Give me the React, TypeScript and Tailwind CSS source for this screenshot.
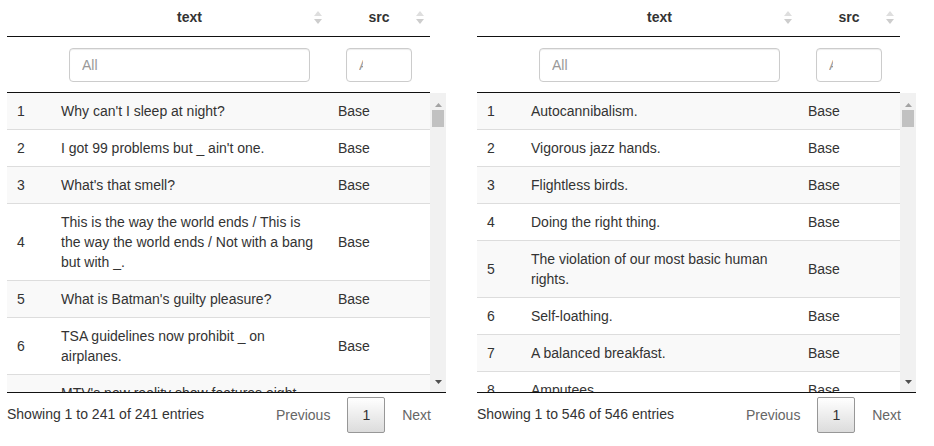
const leftRows = [
  "Why can't I sleep at night?",
  "I got 99 problems but _ ain't one.",
  "What's that smell?",
  'This is the way the world ends / This is the way the world ends / Not with a bang but with _.',
  "What is Batman's guilty pleasure?",
  'TSA guidelines now prohibit _ on airplanes.',
  "MTV's new reality show features eight washed-up celebrities living with _.",
];

const rightRows = [
  'Autocannibalism.',
  'Vigorous jazz hands.',
  'Flightless birds.',
  'Doing the right thing.',
  'The violation of our most basic human rights.',
  'Self-loathing.',
  'A balanced breakfast.',
  'Amputees.',
  'Throwing a virgin into a volcano.',
];

function SortIcon() {
  return (
    <svg width="8" height="15" viewBox="0 0 8 15" className="absolute right-[6px] top-[10px]">
      <polygon points="0,6 4,1 8,6" fill="#dedede" />
      <polygon points="0,9 4,14 8,9" fill="#cdcdcd" />
    </svg>
  );
}

function Panel({ rows, total }: { rows: string[]; total: number }) {
  return (
    <div className="w-[439px]">
      {/* Header */}
      <div className="flex w-[423px] border-b border-[#111] font-bold">
        <div className="w-[44px]" />
        <div className="relative w-[277px] px-[18px] pt-[7px] pb-[9px] text-center">
          text
          <SortIcon />
        </div>
        <div className="relative w-[102px] px-[18px] pt-[7px] pb-[9px] text-center">
          src
          <SortIcon />
        </div>
      </div>

      {/* Filters */}
      <div className="flex w-[423px] border-b border-[#111] pt-[11px] pb-[10px]">
        <div className="w-[44px]" />
        <div className="w-[277px] px-[18px]">
          <input
            placeholder="All"
            className="h-[34px] w-full rounded-[4px] border border-[#ccc] px-3 placeholder:text-[#999] shadow-[inset_0_1px_1px_rgba(0,0,0,0.075)]"
          />
        </div>
        <div className="w-[102px] px-[18px]">
          <input
            placeholder="All"
            className="h-[34px] w-full rounded-[4px] border border-[#ccc] pl-3 pr-[48px] placeholder:text-[#999] shadow-[inset_0_1px_1px_rgba(0,0,0,0.075)]"
          />
        </div>
      </div>

      {/* Body + scrollbar */}
      <div className="flex h-[299px]">
        <div className="w-[423px] overflow-hidden">
          {rows.map((r, i) => (
            <div
              key={i}
              className={`flex items-center ${i > 0 ? 'border-t border-[#ddd]' : ''} ${i % 2 === 0 ? 'bg-[#f9f9f9]' : 'bg-white'}`}
            >
              <div className="w-[44px] px-[10px] py-2">{i + 1}</div>
              <div className="w-[277px] px-[10px] py-2">{r}</div>
              <div className="w-[102px] px-[10px] py-2">Base</div>
            </div>
          ))}
        </div>
        <div className="flex w-[16px] flex-col bg-[#f1f1f1]">
          <div className="flex h-[17px] items-end justify-center pb-[3px]">
            <svg width="7" height="4" viewBox="0 0 7 4">
              <polygon points="0,4 3.5,0 7,4" fill="#a3a3a3" />
            </svg>
          </div>
          <div className="mx-[2px] h-[17px] bg-[#c1c1c1]" />
          <div className="flex-1" />
          <div className="flex h-[17px] items-start justify-center pt-[5px]">
            <svg width="7" height="4" viewBox="0 0 7 4">
              <polygon points="0,0 3.5,4 7,0" fill="#505050" />
            </svg>
          </div>
        </div>
      </div>

      {/* Footer */}
      <div className="flex justify-between border-t border-[#111]">
        <div className="pt-[11px]">Showing 1 to {total} of {total} entries</div>
        <div className="flex pt-[4px]">
          <span className="ml-[2px] border border-transparent px-[14px] py-[7px] text-[#666]">Previous</span>
          <span className="ml-[2px] min-w-[21px] rounded-[2px] border border-[#979797] bg-linear-to-b from-white to-[#dcdcdc] px-[14px] py-[7px] text-center">
            1
          </span>
          <span className="ml-[2px] border border-transparent px-[14px] py-[7px] text-[#666]">Next</span>
        </div>
      </div>
    </div>
  );
}

export default function App() {
  return (
    <div className="flex gap-[31px] bg-white pl-[7px] font-['Liberation_Sans',Arial,sans-serif] text-[14px] leading-5 text-[#333]">
      <Panel rows={leftRows} total={241} />
      <Panel rows={rightRows} total={546} />
    </div>
  );
}
